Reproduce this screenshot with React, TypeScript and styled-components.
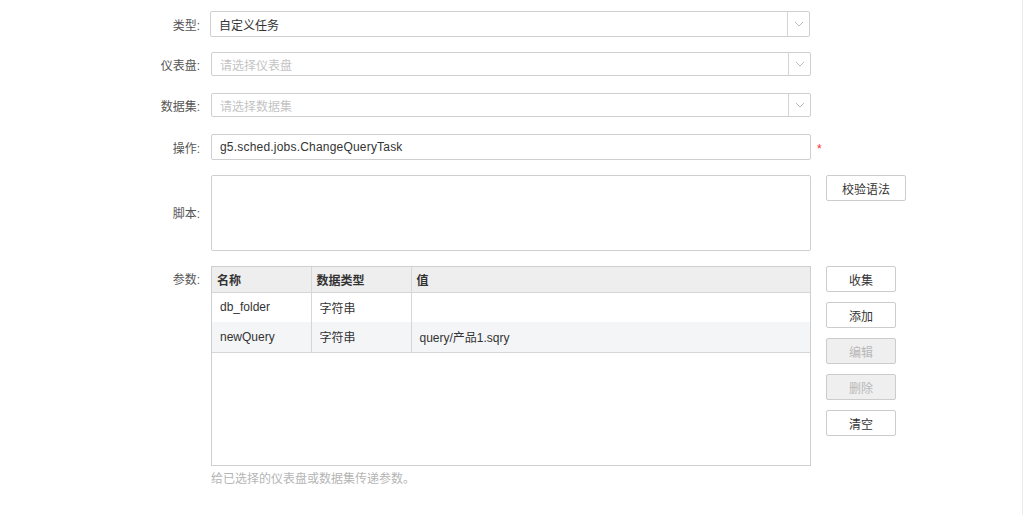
import React from "react";
import styled, { createGlobalStyle } from "styled-components";

const Global = createGlobalStyle`
  html, body { margin: 0; padding: 0; background: #fff; }
  body { font-family: "Liberation Sans", Arial, "Noto Sans CJK SC", sans-serif; font-size: 12px; color: #333; }
  * { box-sizing: border-box; }
`;

const Page = styled.div`
  width: 1023px;
  height: 515px;
  border-right: 1px solid #ececec;
  padding-top: 11px;
`;

const Row = styled.div<{ $top: number; $align?: string }>`
  display: grid;
  grid-template-columns: 210px 600px 1fr;
  align-items: ${(p) => p.$align || "center"};
  margin-top: ${(p) => p.$top}px;
`;

const Label = styled.div<{ $pt?: number }>`
  text-align: right;
  padding-right: 10px;
  color: #555;
  font-size: 12px;
  padding-top: ${(p) => p.$pt || 0}px;
  align-self: ${(p) => (p.$pt ? "start" : "center")};
`;

const Box = styled.div<{ $h: number; $shift?: number }>`
  height: ${(p) => p.$h}px;
  border: 1px solid #cfcfcf;
  border-radius: 2px;
  display: flex;
  align-items: stretch;
  background: #fff;
  margin-left: ${(p) => p.$shift || 0}px;
  margin-right: ${(p) => -(p.$shift || 0)}px;
`;

const BoxText = styled.div<{ $placeholder?: boolean; $spacing?: number }>`
  flex: 1;
  display: flex;
  align-items: center;
  padding-left: 8px;
  color: ${(p) => (p.$placeholder ? "#c4c4c4" : "#333")};
  font-size: 12px;
  letter-spacing: ${(p) => p.$spacing || 0}px;
  white-space: nowrap;
`;

const Arrow = styled.div`
  width: 22px;
  border-left: 1px solid #d4d4d4;
  display: flex;
  align-items: center;
  justify-content: center;
`;

const Side = styled.div`
  padding-left: 16px;
  display: flex;
  flex-direction: column;
  align-items: flex-start;
  gap: 10px;
`;

const Star = styled.span`
  color: #ff2a2a;
  font-size: 12px;
  padding-left: 7px;
  padding-top: 3px;
`;

const TextArea = styled.div`
  height: 76px;
  border: 1px solid #cfcfcf;
  border-radius: 2px;
  margin-left: 1px;
  margin-right: -1px;
`;

const Button = styled.div<{ $w?: number; $disabled?: boolean }>`
  width: ${(p) => p.$w || 70}px;
  height: 26px;
  border: 1px solid #cccccc;
  border-radius: 2px;
  background: ${(p) => (p.$disabled ? "#efefef" : "#fff")};
  color: ${(p) => (p.$disabled ? "#b8b8b8" : "#333")};
  display: flex;
  align-items: center;
  justify-content: center;
  font-size: 12px;
`;

const TableWrap = styled.div`
  height: 200px;
  border: 1px solid #cfcfcf;
  margin-left: 1px;
  margin-right: -1px;
`;

const Table = styled.table`
  width: 100%;
  border-collapse: collapse;
  table-layout: fixed;
  font-size: 12px;
`;

const Th = styled.th<{ $w?: number }>`
  width: ${(p) => (p.$w ? `${p.$w}px` : "auto")};
  height: 25px;
  background: #eeeeee;
  text-align: left;
  font-weight: bold;
  color: #333;
  padding: 0 5px;
  border-bottom: 1px solid #d6d6d6;
  border-right: 1px solid #d6d6d6;
  &:last-child { border-right: none; }
`;

const Tr = styled.tr<{ $alt?: boolean }>`
  background: ${(p) => (p.$alt ? "#f4f5f7" : "#fff")};
`;

const Td = styled.td`
  height: 30px;
  padding: 0 8px;
  color: #333;
  border-right: 1px solid #d6d6d6;
  &:last-child { border-right: none; }
  tr:last-child > & { border-bottom: 1px solid #d6d6d6; }
`;

const Help = styled.div`
  grid-column: 2;
  color: #b5b5b5;
  font-size: 12px;
  line-height: 14px;
  padding-top: 6px;
  padding-left: 1px;
`;

const Chevron = () => (
  <svg width="10" height="6" viewBox="0 0 10 6">
    <path d="M1 1 L5 5 L9 1" fill="none" stroke="#b9bcc4" strokeWidth="1" />
  </svg>
);

const Select = ({ h, text, placeholder, shift }: { h: number; text: string; placeholder?: boolean; shift?: number }) => (
  <Box $h={h} $shift={shift}>
    <BoxText $placeholder={placeholder}>{text}</BoxText>
    <Arrow>
      <Chevron />
    </Arrow>
  </Box>
);

const params = [
  { name: "db_folder", type: "字符串", value: "" },
  { name: "newQuery", type: "字符串", value: "query/产品1.sqry" },
];

export default function App() {
  return (
    <>
      <Global />
      <Page>
        <Row $top={0}>
          <Label>类型:</Label>
          <Select h={26} text="自定义任务" />
        </Row>
        <Row $top={15}>
          <Label>仪表盘:</Label>
          <Select h={24} text="请选择仪表盘" placeholder shift={1} />
        </Row>
        <Row $top={17}>
          <Label>数据集:</Label>
          <Select h={24} text="请选择数据集" placeholder shift={1} />
        </Row>
        <Row $top={17}>
          <Label>操作:</Label>
          <Box $h={26} $shift={1}>
            <BoxText $spacing={0.2}>g5.sched.jobs.ChangeQueryTask</BoxText>
          </Box>
          <Star>*</Star>
        </Row>
        <Row $top={15} $align="start">
          <Label $pt={29}>脚本:</Label>
          <TextArea />
          <Side>
            <Button $w={80}>校验语法</Button>
          </Side>
        </Row>
        <Row $top={15} $align="start">
          <Label $pt={4}>参数:</Label>
          <TableWrap>
            <Table>
              <thead>
                <tr>
                  <Th $w={99}>名称</Th>
                  <Th $w={100}>数据类型</Th>
                  <Th>值</Th>
                </tr>
              </thead>
              <tbody>
                {params.map((p, i) => (
                  <Tr key={p.name} $alt={i % 2 === 1}>
                    <Td>{p.name}</Td>
                    <Td>{p.type}</Td>
                    <Td>{p.value}</Td>
                  </Tr>
                ))}
              </tbody>
            </Table>
          </TableWrap>
          <Side>
            <Button>收集</Button>
            <Button>添加</Button>
            <Button $disabled>编辑</Button>
            <Button $disabled>删除</Button>
            <Button>清空</Button>
          </Side>
        </Row>
        <Row $top={0}>
          <Help>给已选择的仪表盘或数据集传递参数。</Help>
        </Row>
      </Page>
    </>
  );
}
